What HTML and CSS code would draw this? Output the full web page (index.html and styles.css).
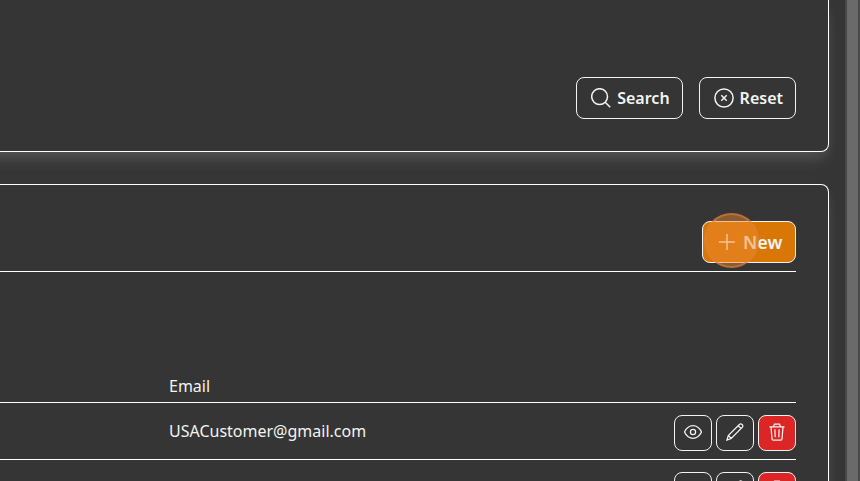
FILE: index.html
```
<!DOCTYPE html>
<html lang="en">
<head>
<meta charset="utf-8">
<title>Customers</title>
<link rel="stylesheet" href="styles.css">
</head>
<body>
<svg class="sprite" aria-hidden="true">
  <symbol id="eye" viewBox="0 0 18 18"><path d="M.5 9C2.500 5 5.400 2.700 9 2.700s6.500 2.300 8.500 6.300c-2 4-4.900 6.300-8.500 6.300S2.500 13 .5 9z"/><circle cx="9" cy="9" r="2.600"/></symbol>
  <symbol id="pencil" viewBox="0 0 18 18"><path d="M.9 17.100l1.400-4.600L13.600 1.200q1.200-.9 2.500.3t.3 2.600L5.200 15.500zM12.200 2.700l2.800 2.800M2.300 12.500l2.900 3"/></symbol>
  <symbol id="trash" viewBox="0 0 18 18"><path d="M1.500 3.800h15M5.500 3.600l1-2.500h5l1 2.500M3 4l1 12q.1 1.200 1.300 1.200h7.400q1.200 0 1.300-1.200l1-12M6.900 6.300l.3 8M11.100 6.300l-.3 8"/></symbol>
</svg>
<main class="content">
  <section class="card filters">
    <button class="btn"><svg class="icon" viewBox="0 0 20 20"><circle cx="8.600" cy="8.600" r="7.900"/><path d="M14.200 14.200l5 5"/></svg>Search</button>
    <button class="btn"><svg class="icon" viewBox="0 0 20 20"><circle cx="10" cy="10" r="9.100"/><path d="M7.300 7.300l5.400 5.400M12.700 7.300l-5.400 5.400"/></svg>Reset</button>
  </section>
  <section class="card results">
    <header class="toolbar">
      <button class="btn btn-new"><svg class="icon" viewBox="0 0 20 20"><path d="M10 2v16M2 10h16"/></svg>New<span class="click"></span></button>
    </header>
    <div class="row head"><span>Email</span></div>
    <div class="row">
      <span>USACustomer@gmail.com</span>
      <div class="actions">
        <button class="action"><svg><use href="#eye"/></svg></button>
        <button class="action"><svg><use href="#pencil"/></svg></button>
        <button class="action delete"><svg><use href="#trash"/></svg></button>
      </div>
    </div>
    <div class="row">
      <span></span>
      <div class="actions">
        <button class="action"><svg><use href="#eye"/></svg></button>
        <button class="action"><svg><use href="#pencil"/></svg></button>
        <button class="action delete"><svg><use href="#trash"/></svg></button>
      </div>
    </div>
  </section>
</main>
<div class="scrollbar"></div>
</body>
</html>
```
FILE: styles.css
```
* { box-sizing: border-box; }
body {
  margin: 0;
  height: 481px;
  display: flex;
  overflow: hidden;
  background: #353535;
  color: #f3f3f3;
  font: 16px/24px "Noto Sans", sans-serif;
}
.sprite { position: absolute; width: 0; height: 0; }
svg { fill: none; stroke: currentColor; }
.content {
  width: 845px;
  padding-right: 16px;
  overflow: hidden;
  flex: none;
}
.card {
  margin-left: -32px;
  border: 1px solid #fff;
  border-left: 0;
  background: #353535;
  box-shadow: 0 10px 15px -3px rgba(255, 255, 255, .12), 0 4px 12px rgba(255, 255, 255, .05);
  padding-right: 32px;
}
.filters {
  height: 152px;
  border-top: 0;
  border-radius: 0 0 8px 0;
  display: flex;
  justify-content: flex-end;
  align-items: flex-end;
  gap: 16px;
  padding-bottom: 32px;
}
.results {
  margin-top: 32px;
  height: 340px;
  border-radius: 0 8px 0 0;
}
.btn {
  height: 42px;
  display: flex;
  align-items: center;
  gap: 6px;
  padding: 0 12px 0 14px;
  border: 1px solid #f3f3f3;
  border-radius: 8px;
  background: #353535;
  color: inherit;
  font: 600 16px/24px "Noto Sans", sans-serif;
}
.icon { width: 20px; height: 20px; stroke-width: 1.5; }
.toolbar {
  height: 87px;
  padding-top: 36px;
  display: flex;
  justify-content: flex-end;
  border-bottom: 1px solid #fff;
}
.btn-new {
  position: relative;
  width: 94px;
  background: #d97706;
  font-size: 18px;
}
.click {
  position: absolute;
  left: 1px;
  top: -9.500px;
  width: 55px;
  height: 55px;
  border-radius: 50%;
  border: 2px solid rgba(218, 128, 60, .55);
  background: rgba(240, 137, 45, .46);
}
.row {
  height: 57px;
  padding-left: 201px;
  display: flex;
  align-items: center;
  justify-content: space-between;
  border-bottom: 1px solid #fff;
}
.head {
  height: 131px;
  align-items: flex-end;
  padding-bottom: 4px;
}
.actions { display: flex; gap: 4px; padding-top: 4px; }
.action {
  width: 38px;
  height: 36px;
  padding: 0 0 2px;
  display: grid;
  place-items: center;
  border: 1px solid #f3f3f3;
  border-radius: 8px;
  background: #353535;
  color: #f3f3f3;
}
.action svg { width: 18px; height: 18px; stroke-width: 1.25; }
.delete { background: #dc2626; }
.scrollbar {
  width: 15px;
  flex: none;
  background: #6a6a6a;
  border: solid #484848;
  border-width: 0 2px;
}
```
